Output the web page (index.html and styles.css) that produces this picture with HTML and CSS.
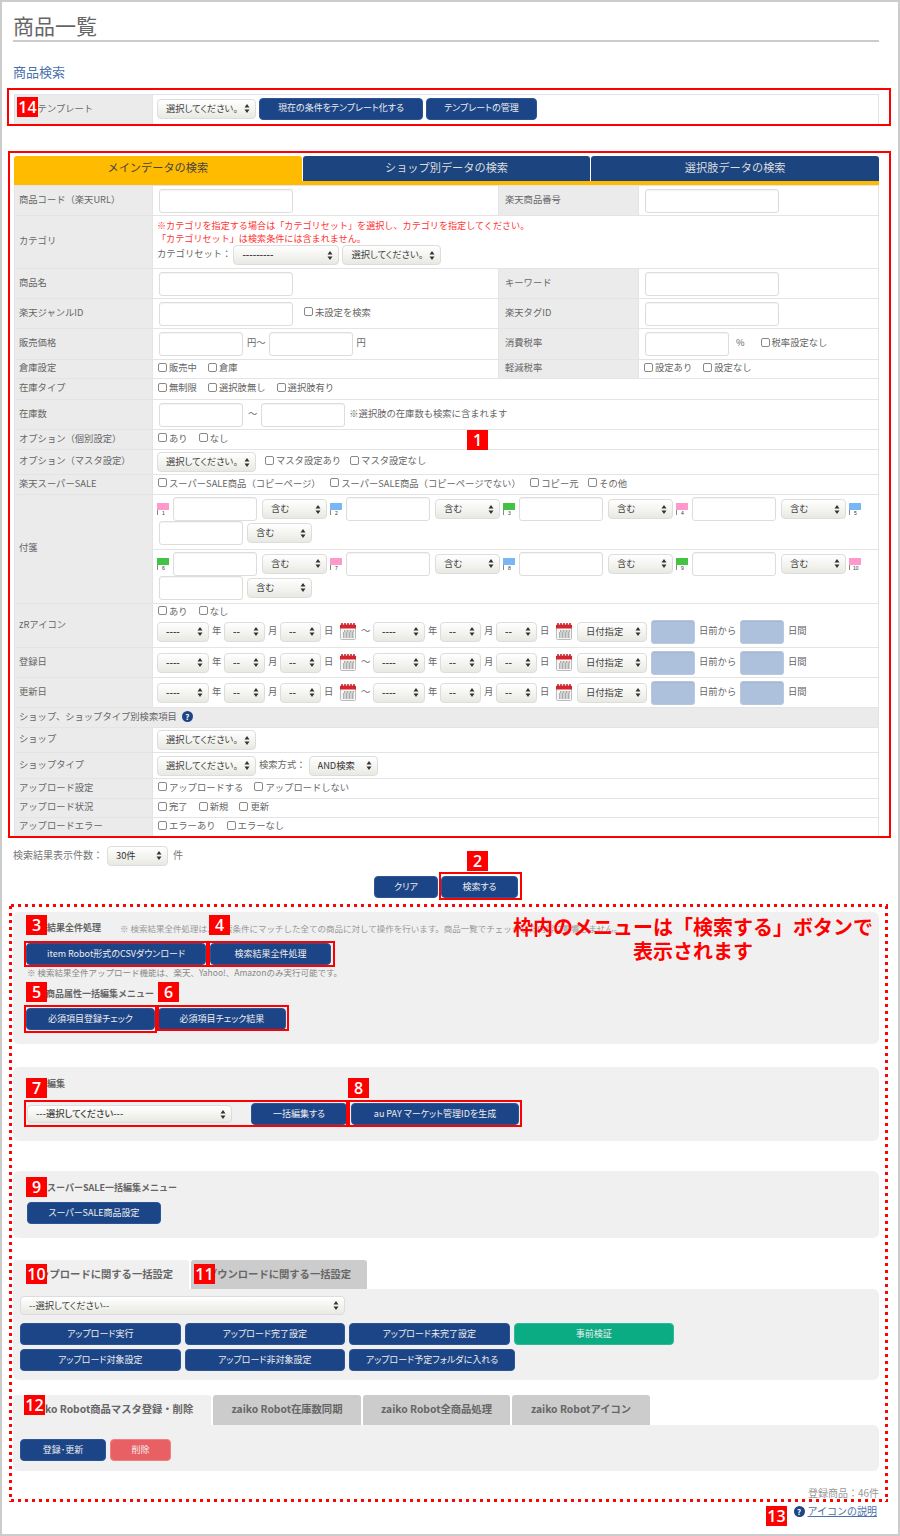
FILE: index.html
```html
<!DOCTYPE html>
<html lang="ja">
<head>
    <meta charset="UTF-8">
    <meta name="viewport" content="width=device-width, initial-scale=1.0">
    <title>商品一覧</title>
    <link rel="stylesheet" href="styles.css">
</head>
<body>
<svg class="defs" width="0" height="0">
    <symbol id="cal" viewBox="0 0 16 17">
        <rect x="0.5" y="1.5" width="15" height="15" rx="1" fill="#f6f6f6" stroke="#bbb"/>
        <rect x="0" y="2" width="16" height="3.5" fill="#d8232a"/>
        <path d="M2 0v3M5 0v3M8 0v3M11 0v3M14 0v3" stroke="#d8232a" stroke-width="1.6"/>
        <path d="M4 8h10M3 10h11M3 12h11M3 14h11" stroke="#666" stroke-width="1.2" stroke-dasharray="1 .5"/>
    </symbol>
    <symbol id="flag" viewBox="0 0 12 12">
        <rect width="12" height="7" fill="currentColor"/>
        <rect y="7" width="1" height="5" fill="#888"/>
    </symbol>
</svg>

<div class="page">
    <h1>商品一覧</h1>
    <h2>商品検索</h2>

    <table class="form form-tpl">
        <colgroup><col class="col-th"><col></colgroup>
        <tr class="h30">
            <th>検索テンプレート</th>
            <td>
                <div class="ctl">
                    <select class="sel sel-99"><option>選択してください。</option></select>
                    <a class="btn btn-tpl1">現在の条件をテンプレート化する</a>
                    <a class="btn btn-tpl2">テンプレートの管理</a>
                </div>
            </td>
        </tr>
    </table>

    <div class="tabs">
        <div class="tab on">メインデータの検索</div>
        <div class="tab">ショップ別データの検索</div>
        <div class="tab">選択肢データの検索</div>
    </div>

    <table class="form">
        <colgroup><col class="col-th"><col class="col-td"><col class="col-th2"><col></colgroup>
        <tr class="h30">
            <th>商品コード（楽天URL）</th>
            <td><input class="inp inp-l"></td>
            <th class="th2">楽天商品番号</th>
            <td><input class="inp inp-l"></td>
        </tr>
        <tr class="h53">
            <th>カテゴリ</th>
            <td colspan="3">
                <div class="red">※カテゴリを指定する場合は「カテゴリセット」を選択し、カテゴリを指定してください。</div>
                <div class="red">「カテゴリセット」は検索条件には含まれません。</div>
                <div class="ctl">
                    <span class="tx">カテゴリセット：</span>
                    <select class="sel sel-cat"><option>---------</option></select>
                    <select class="sel sel-99"><option>選択してください。</option></select>
                </div>
            </td>
        </tr>
        <tr class="h30">
            <th>商品名</th>
            <td><input class="inp inp-l"></td>
            <th class="th2">キーワード</th>
            <td><input class="inp inp-l"></td>
        </tr>
        <tr class="h30">
            <th>楽天ジャンルID</th>
            <td>
                <div class="ctl">
                    <input class="inp inp-l">
                    <label class="ck ck-after"><input type="checkbox">未設定を検索</label>
                </div>
            </td>
            <th class="th2">楽天タグID</th>
            <td><input class="inp inp-l"></td>
        </tr>
        <tr class="h31">
            <th>販売価格</th>
            <td>
                <div class="ctl">
                    <input class="inp inp-s"><span class="unit">円～</span><input class="inp inp-s"><span class="unit">円</span>
                </div>
            </td>
            <th class="th2">消費税率</th>
            <td>
                <div class="ctl">
                    <input class="inp inp-s"><span class="unit unit-pct">%</span>
                    <label class="ck"><input type="checkbox">税率設定なし</label>
                </div>
            </td>
        </tr>
        <tr class="h19">
            <th>倉庫設定</th>
            <td>
                <label class="ck"><input type="checkbox">販売中</label>
                <label class="ck"><input type="checkbox">倉庫</label>
            </td>
            <th class="th2">軽減税率</th>
            <td>
                <label class="ck"><input type="checkbox">設定あり</label>
                <label class="ck"><input type="checkbox">設定なし</label>
            </td>
        </tr>
        <tr class="h21">
            <th>在庫タイプ</th>
            <td colspan="3">
                <label class="ck"><input type="checkbox">無制限</label>
                <label class="ck"><input type="checkbox">選択肢無し</label>
                <label class="ck"><input type="checkbox">選択肢有り</label>
            </td>
        </tr>
        <tr class="h30">
            <th>在庫数</th>
            <td colspan="3">
                <div class="ctl">
                    <input class="inp inp-s"><span class="unit unit-tilde">～</span><input class="inp inp-s"><span class="unit">※選択肢の在庫数も検索に含まれます</span>
                </div>
            </td>
        </tr>
        <tr class="h20">
            <th>オプション（個別設定）</th>
            <td colspan="3">
                <label class="ck"><input type="checkbox">あり</label>
                <label class="ck"><input type="checkbox">なし</label>
            </td>
        </tr>
        <tr class="h25">
            <th>オプション（マスタ設定）</th>
            <td colspan="3">
                <div class="ctl">
                    <select class="sel sel-99"><option>選択してください。</option></select>
                    <label class="ck ck-after"><input type="checkbox">マスタ設定あり</label>
                    <label class="ck"><input type="checkbox">マスタ設定なし</label>
                </div>
            </td>
        </tr>
        <tr class="h20">
            <th>楽天スーパーSALE</th>
            <td colspan="3">
                <label class="ck ck-wide"><input type="checkbox">スーパーSALE商品（コピーページ）</label>
                <label class="ck ck-wide"><input type="checkbox">スーパーSALE商品（コピーページでない）</label>
                <label class="ck ck-wide"><input type="checkbox">コピー元</label>
                <label class="ck"><input type="checkbox">その他</label>
            </td>
        </tr>
        <tr class="h55">
            <th rowspan="2">付箋</th>
            <td colspan="3">
                <div class="sticky">
                    <svg class="flag pink"><use href="#flag"/><text x="5" y="12">1</text></svg><input class="inp inp-s"><select class="sel sel-inc"><option>含む</option></select>
                    <svg class="flag blue"><use href="#flag"/><text x="5" y="12">2</text></svg><input class="inp inp-s"><select class="sel sel-inc"><option>含む</option></select>
                    <svg class="flag green"><use href="#flag"/><text x="5" y="12">3</text></svg><input class="inp inp-s"><select class="sel sel-inc"><option>含む</option></select>
                    <svg class="flag pink"><use href="#flag"/><text x="5" y="12">4</text></svg><input class="inp inp-s"><select class="sel sel-inc"><option>含む</option></select>
                    <svg class="flag blue"><use href="#flag"/><text x="5" y="12">5</text></svg><input class="inp inp-s inp-lead"><select class="sel sel-inc sel-lead"><option>含む</option></select>
                </div>
            </td>
        </tr>
        <tr class="h54">
            <td colspan="3">
                <div class="sticky">
                    <svg class="flag green"><use href="#flag"/><text x="5" y="12">6</text></svg><input class="inp inp-s"><select class="sel sel-inc"><option>含む</option></select>
                    <svg class="flag pink"><use href="#flag"/><text x="5" y="12">7</text></svg><input class="inp inp-s"><select class="sel sel-inc"><option>含む</option></select>
                    <svg class="flag blue"><use href="#flag"/><text x="5" y="12">8</text></svg><input class="inp inp-s"><select class="sel sel-inc"><option>含む</option></select>
                    <svg class="flag green"><use href="#flag"/><text x="5" y="12">9</text></svg><input class="inp inp-s"><select class="sel sel-inc"><option>含む</option></select>
                    <svg class="flag pink"><use href="#flag"/><text x="4" y="12">10</text></svg><input class="inp inp-s inp-lead"><select class="sel sel-inc sel-lead"><option>含む</option></select>
                </div>
            </td>
        </tr>
        <tr class="h44">
            <th>zRアイコン</th>
            <td colspan="3">
                <div class="zr-checks">
                    <label class="ck"><input type="checkbox">あり</label>
                    <label class="ck"><input type="checkbox">なし</label>
                </div>
                <div class="ctl dates">
                    <select class="sel sel-y"><option>----</option></select><span>年</span>
                    <select class="sel sel-m"><option>--</option></select><span>月</span>
                    <select class="sel sel-m"><option>--</option></select><span>日</span>
                    <svg class="cal"><use href="#cal"/></svg><span class="tilde">～</span>
                    <select class="sel sel-y"><option>----</option></select><span>年</span>
                    <select class="sel sel-m"><option>--</option></select><span>月</span>
                    <select class="sel sel-m"><option>--</option></select><span>日</span>
                    <svg class="cal"><use href="#cal"/></svg>
                    <select class="sel sel-date"><option>日付指定</option></select>
                    <input class="inp inp-day"><span class="day-lb">日前から</span>
                    <input class="inp inp-day"><span class="day-lb">日間</span>
                </div>
            </td>
        </tr>
        <tr class="h30">
            <th>登録日</th>
            <td colspan="3">
                <div class="ctl dates">
                    <select class="sel sel-y"><option>----</option></select><span>年</span>
                    <select class="sel sel-m"><option>--</option></select><span>月</span>
                    <select class="sel sel-m"><option>--</option></select><span>日</span>
                    <svg class="cal"><use href="#cal"/></svg><span class="tilde">～</span>
                    <select class="sel sel-y"><option>----</option></select><span>年</span>
                    <select class="sel sel-m"><option>--</option></select><span>月</span>
                    <select class="sel sel-m"><option>--</option></select><span>日</span>
                    <svg class="cal"><use href="#cal"/></svg>
                    <select class="sel sel-date"><option>日付指定</option></select>
                    <input class="inp inp-day"><span class="day-lb">日前から</span>
                    <input class="inp inp-day"><span class="day-lb">日間</span>
                </div>
            </td>
        </tr>
        <tr class="h30">
            <th>更新日</th>
            <td colspan="3">
                <div class="ctl dates">
                    <select class="sel sel-y"><option>----</option></select><span>年</span>
                    <select class="sel sel-m"><option>--</option></select><span>月</span>
                    <select class="sel sel-m"><option>--</option></select><span>日</span>
                    <svg class="cal"><use href="#cal"/></svg><span class="tilde">～</span>
                    <select class="sel sel-y"><option>----</option></select><span>年</span>
                    <select class="sel sel-m"><option>--</option></select><span>月</span>
                    <select class="sel sel-m"><option>--</option></select><span>日</span>
                    <svg class="cal"><use href="#cal"/></svg>
                    <select class="sel sel-date"><option>日付指定</option></select>
                    <input class="inp inp-day"><span class="day-lb">日前から</span>
                    <input class="inp inp-day"><span class="day-lb">日間</span>
                </div>
            </td>
        </tr>
        <tr class="h20">
            <th colspan="4">ショップ、ショップタイプ別検索項目 <span class="help">?</span></th>
        </tr>
        <tr class="h25">
            <th>ショップ</th>
            <td colspan="3"><select class="sel sel-99"><option>選択してください。</option></select></td>
        </tr>
        <tr class="h26">
            <th>ショップタイプ</th>
            <td colspan="3">
                <div class="ctl">
                    <select class="sel sel-99"><option>選択してください。</option></select>
                    <span class="method">検索方式：</span>
                    <select class="sel sel-and"><option>AND検索</option></select>
                </div>
            </td>
        </tr>
        <tr class="h20">
            <th>アップロード設定</th>
            <td colspan="3">
                <label class="ck"><input type="checkbox">アップロードする</label>
                <label class="ck"><input type="checkbox">アップロードしない</label>
            </td>
        </tr>
        <tr class="h19">
            <th>アップロード状況</th>
            <td colspan="3">
                <label class="ck"><input type="checkbox">完了</label>
                <label class="ck"><input type="checkbox">新規</label>
                <label class="ck"><input type="checkbox">更新</label>
            </td>
        </tr>
        <tr class="h19">
            <th>アップロードエラー</th>
            <td colspan="3">
                <label class="ck"><input type="checkbox">エラーあり</label>
                <label class="ck"><input type="checkbox">エラーなし</label>
            </td>
        </tr>
    </table>

    <div class="count ctl">
        <span class="tx">検索結果表示件数：</span>
        <select class="sel sel-num"><option>30件</option></select>
        <span class="tx">件</span>
    </div>

    <div class="search-btns">
        <a class="btn btn-clear">クリア</a>
        <a class="btn btn-search">検索する</a>
    </div>

    <div class="panel panel-all">
        <div class="head-line">
            <span class="panel-title">検索結果全件処理</span>
            <span class="note-top">※ 検索結果全件処理は、検索条件にマッチした全ての商品に対して操作を行います。商品一覧でチェックした内容に影響しません。</span>
        </div>
        <div class="btn-row">
            <a class="btn btn-csv">item Robot形式のCSVダウンロード</a>
            <a class="btn btn-allproc">検索結果全件処理</a>
        </div>
        <p class="note-sub">※ 検索結果全件アップロード機能は、楽天、Yahoo!、Amazonのみ実行可能です。</p>
        <div class="panel-title title-attr">楽天商品属性一括編集メニュー</div>
        <div class="btn-row">
            <a class="btn btn-req1">必須項目登録チェック</a>
            <a class="btn btn-req2">必須項目チェック結果</a>
        </div>
    </div>

    <div class="panel panel-edit">
        <div class="panel-title title-edit">一括編集</div>
        <div class="ctl edit-row">
            <select class="sel sel-edit"><option>---選択してください---</option></select>
            <a class="btn btn-edit">一括編集する</a>
            <a class="btn btn-au">au PAY マーケット管理IDを生成</a>
        </div>
    </div>

    <div class="panel panel-sale">
        <div class="panel-title title-sale">楽天スーパーSALE一括編集メニュー</div>
        <a class="btn btn-sale">スーパーSALE商品設定</a>
    </div>

    <div class="subtabs subtabs-up">
        <div class="subtab on tab-up">アップロードに関する一括設定</div>
        <div class="subtab tab-up">ダウンロードに関する一括設定</div>
    </div>
    <div class="panel panel-up">
        <select class="sel sel-up"><option>--選択してください--</option></select>
        <div class="btn-grid">
            <a class="btn btn-up">アップロード実行</a>
            <a class="btn btn-up">アップロード完了設定</a>
            <a class="btn btn-up">アップロード未完了設定</a>
            <a class="btn btn-up btn-green">事前検証</a>
        </div>
        <div class="btn-grid">
            <a class="btn btn-up">アップロード対象設定</a>
            <a class="btn btn-up">アップロード非対象設定</a>
            <a class="btn btn-up btn-folder">アップロード予定フォルダに入れる</a>
        </div>
    </div>

    <div class="subtabs subtabs-zaiko">
        <div class="subtab on tab-z1">zaiko Robot商品マスタ登録・削除</div>
        <div class="subtab tab-z2">zaiko Robot在庫数同期</div>
        <div class="subtab tab-z3">zaiko Robot全商品処理</div>
        <div class="subtab tab-z4">zaiko Robotアイコン</div>
    </div>
    <div class="panel panel-zaiko">
        <a class="btn btn-reg">登録･更新</a>
        <a class="btn btn-del">削除</a>
    </div>

    <div class="total">登録商品：46件</div>
    <div class="icon-link"><span class="help">?</span><a href="#">アイコンの説明</a></div>

    <!-- 注釈 -->
    <div class="frame f-tpl"></div>
    <div class="frame f-main"></div>
    <div class="frame f-search"></div>
    <div class="frame f-3"></div>
    <div class="frame f-4"></div>
    <div class="frame f-5"></div>
    <div class="frame f-6"></div>
    <div class="frame f-7"></div>
    <div class="frame f-8"></div>
    <div class="dotted"></div>
    <div class="caption">枠内のメニューは「検索する」ボタンで<br>表示されます</div>
    <span class="badge b14">14</span>
    <span class="badge b1">1</span>
    <span class="badge b2">2</span>
    <span class="badge b3">3</span>
    <span class="badge b4">4</span>
    <span class="badge b5">5</span>
    <span class="badge b6">6</span>
    <span class="badge b7">7</span>
    <span class="badge b8">8</span>
    <span class="badge b9">9</span>
    <span class="badge b10">10</span>
    <span class="badge b11">11</span>
    <span class="badge b12">12</span>
    <span class="badge b13">13</span>
</div>
</body>
</html>
```

FILE: styles.css
```css
* {
    box-sizing: border-box;
}

body {
    margin: 0;
    font-family: "Noto Sans CJK JP", "Noto Sans", sans-serif;
    font-size: 9.3px;
    color: #666;
}

.defs {
    position: absolute;
}

.page {
    position: relative;
    width: 900px;
    height: 1536px;
    overflow: hidden;
    padding: 14px 21px 0 13px;
    background: #fff;
    box-shadow: inset 0 0 0 2px #ccc;
}

h1 {
    margin: 0;
    height: 28px;
    border-bottom: 2px solid #ccc;
    font-size: 21px;
    font-weight: 400;
    line-height: 22px;
    color: #666;
}

h2 {
    margin: 23px 0 15px;
    font-size: 13px;
    font-weight: 400;
    line-height: 14px;
    color: #4a72ad;
}

/* フォーム */
.form {
    width: 865px;
    margin-left: 1px;
    border-collapse: collapse;
    table-layout: fixed;
}

.form th,
.form td {
    border: 1px solid #e4e4e4;
    padding: 0 4px;
    font-weight: 400;
    line-height: 13px;
    text-align: left;
    vertical-align: middle;
}

.form th {
    padding-bottom: 3px;
    background: #ebebeb;
}

.form .th2 {
    padding-left: 6px;
}

.form-tpl td {
    padding-bottom: 2px;
}

.col-th { width: 138px; }
.col-td { width: 346px; }
.col-th2 { width: 140px; }

.h19 { height: 19px; }
.h20 { height: 20px; }
.h21 { height: 21px; }
.h25 { height: 25px; }
.h26 { height: 26px; }
.h30 { height: 30px; }
.h31 { height: 31px; }
.h44 { height: 44px; }
.h53 { height: 53px; }
.h54 { height: 54px; }
.h55 { height: 55px; }

.ctl {
    display: flex;
    align-items: center;
}

.tx,
.unit,
.method,
.dates span {
    padding-bottom: 3px;
    white-space: nowrap;
}

.red {
    color: #f33;
    font-size: 9.1px;
    line-height: 13px;
}

.inp {
    display: block;
    margin: 0 2px;
    height: 24px;
    border: 1px solid #ddd;
    border-radius: 3px;
    background: #fff;
    box-shadow: inset 0 1px 1px rgba(0, 0, 0, .05);
    outline: none;
}

.inp-l { width: 134px; }
.inp-s { width: 84px; }

.inp-day {
    width: 44px;
    margin: 0;
    border-color: #b8c8de;
    background: #adc1dc;
}

.unit {
    margin: 0 1px 0 2px;
}

.unit-tilde {
    margin: 0 2px 0 3px;
}

.unit-pct {
    margin: 0 15px 0 5px;
}

.sel {
    display: block;
    flex: none;
    height: 20px;
    border: 1px solid #ddd;
    border-radius: 4px;
    padding: 0 0 2px 8px;
    appearance: none;
    background: url("data:image/svg+xml,%3Csvg xmlns='http://www.w3.org/2000/svg' width='6' height='9'%3E%3Cpath d='M3 0l2.5 3.5h-5zM3 9l2.5-3.5h-5z' fill='%23333'/%3E%3C/svg%3E") no-repeat right 5px center,
        linear-gradient(#fff, #e9e9e3);
    font-family: inherit;
    font-size: 9.3px;
    font-feature-settings: "palt";
    color: #444;
}

.sel-99 { width: 99px; }
.sel-cat { width: 106px; margin: 0 3px 0 2px; font-weight: 700; }
.sel-inc { width: 65px; margin-left: 5px; }
.sel-y { width: 52px; font-weight: 700; }
.sel-m { width: 41px; font-weight: 700; }
.sel-date { width: 70px; margin-right: 4px; }
.sel-and { width: 69px; color: #333; }
.sel-num { width: 61px; margin: 0 5px 0 4px; color: #333; }

.ck {
    display: inline-flex;
    align-items: center;
    margin: 0 8px 0 1px;
    padding-bottom: 3px;
    white-space: nowrap;
}

.ck input {
    width: 9px;
    height: 9px;
    margin: -1px 2px 0 0;
    border: 1px solid #888;
    border-radius: 2px;
    appearance: none;
    background: #fff;
}

.ck-after {
    margin-left: 9px;
}

.ck-wide {
    margin-right: 6.5px;
}

.method {
    margin: 0 3px;
}

.zr-checks {
    height: 14px;
    margin-bottom: 1px;
}

.zr-checks + .dates {
    margin-bottom: 3px;
}

/* 付箋 */
.sticky {
    display: flex;
    flex-wrap: wrap;
    align-items: center;
    margin: 0 0 2px;
}

.sticky .inp {
    margin: 0 0 0 4px;
}

.sticky .inp-lead {
    margin-left: 2px;
}

.sticky .sel-lead {
    margin-left: 4px;
}

.flag {
    width: 12px;
    height: 12px;
    margin-left: 3px;
}

.sticky .flag:first-child {
    margin-left: 0;
}

.flag text {
    font-family: "Liberation Sans", sans-serif;
    font-size: 5px;
    fill: #333;
}

.pink { color: #ff99cc; }
.blue { color: #78b6f6; }
.green { color: #43c243; }

/* 日付 */
.dates span {
    flex: none;
    width: 9px;
    margin: 0 3px;
}

.dates .day-lb {
    width: 36px;
    margin: 0 5px 0 4px;
}

.cal {
    flex: none;
    width: 16px;
    height: 17px;
    margin: 0 5px 0 4px;
}

.dates .tilde {
    margin: 0 3px 0 0;
}

.help {
    display: inline-block;
    width: 11px;
    height: 11px;
    margin-left: 3px;
    border-radius: 50%;
    background: #1c4587;
    color: #fff;
    font-size: 8px;
    font-weight: 700;
    line-height: 11px;
    text-align: center;
}

/* タブ */
.tabs {
    display: flex;
    gap: 1px;
    width: 865px;
    height: 29px;
    margin: 31px 0 0 1px;
    border-bottom: 4px solid #ffbb00;
}

.tab {
    flex: 1;
    height: 25px;
    border-radius: 3px 3px 0 0;
    background: #1c4580;
    color: #ddd;
    font-size: 11.2px;
    line-height: 22px;
    text-align: center;
}

.tab.on {
    height: 29px;
    background: #ffbb00;
    color: #444;
}

/* ボタン */
.btn {
    display: flex;
    align-items: center;
    justify-content: center;
    flex: none;
    height: 22px;
    border: 1px solid #2d5596;
    border-radius: 4px;
    padding-bottom: 2px;
    background: #1c4587;
    color: #eee;
    font-size: 9px;
    font-weight: 400;
    font-feature-settings: "palt";
    white-space: nowrap;
}

.btn-tpl1 { width: 164px; margin: 0 3px; }
.btn-tpl2 { width: 111px; }
.btn-clear { width: 64px; }
.btn-search { width: 77px; }
.btn-csv { width: 180px; margin-right: 4px; }
.btn-allproc { width: 121px; }
.btn-req1 { width: 129px; margin-right: 3px; }
.btn-req2 { width: 128px; }
.btn-edit { width: 96px; margin: 0 4px 0 19px; }
.btn-au { width: 168px; }
.btn-sale { width: 134px; }
.btn-up { width: 160.5px; }
.btn-folder { width: 166px; }
.btn-green { background: #0bab83; border-color: #2dbb97; }
.btn-reg { width: 86px; }
.btn-del { width: 61px; margin-left: 4px; background: #e96064; border-color: #ee8084; }

.count {
    height: 19px;
    margin-top: 9px;
    font-size: 10px;
    color: #777;
}

.search-btns {
    display: flex;
    justify-content: center;
    gap: 3px;
    width: 866px;
    margin-top: 11px;
}

/* パネル */
.panel {
    width: 866px;
    border-radius: 6px;
    background: #f0f0f0;
}

.panel-title {
    font-size: 9px;
    font-weight: 700;
    line-height: 14px;
    color: #666;
}

.panel-all {
    height: 132px;
    margin-top: 14px;
    padding: 9px 0 0 13px;
}

.head-line {
    display: flex;
    height: 14px;
    padding-left: 3px;
}

.note-top {
    margin-left: 19px;
    font-size: 8.5px;
    line-height: 14px;
    color: #999;
    white-space: nowrap;
}

.btn-row {
    display: flex;
    margin-top: 8px;
}

.note-sub {
    margin: 0 0 0 1px;
    font-size: 8.5px;
    line-height: 14px;
    color: #888;
}

.title-attr {
    margin: 8px 0 -1px 2px;
}

.panel-edit {
    height: 74px;
    margin-top: 23px;
    padding: 10px 0 0 14px;
}

.title-edit {
    margin-left: 2px;
}

.edit-row {
    margin-top: 12px;
}

.sel-edit {
    width: 205px;
    height: 18px;
    font-weight: 500;
}

.panel-sale {
    height: 67px;
    margin-top: 30px;
    padding: 10px 0 0 14px;
}

.title-sale {
    padding-left: 2px;
}

.panel-sale .btn {
    margin-top: 7px;
}

.subtabs {
    display: flex;
    gap: 2px;
}

.subtabs-up {
    margin-top: 22px;
}

.subtabs-zaiko {
    margin-top: 15px;
}

.subtab {
    border-radius: 3px 3px 0 0;
    background: #ccc;
    font-weight: 700;
    color: #666;
    white-space: nowrap;
    text-align: center;
}

.subtab.on {
    background: #f0f0f0;
}

.tab-up {
    width: 176px;
    height: 29px;
    font-size: 10.3px;
    line-height: 28px;
}

.tab-z1,
.tab-z2,
.tab-z3,
.tab-z4 {
    height: 30px;
    font-size: 10.3px;
    line-height: 28px;
}

.tab-z1 { width: 198px; background: #f0f0f0; }
.tab-z2 { width: 148px; }
.tab-z3 { width: 147px; }
.tab-z4 { width: 138px; }

.panel-up {
    height: 91px;
    padding: 7px 0 0 7px;
    border-radius: 0 6px 6px 6px;
}

.sel-up {
    width: 325px;
    height: 19px;
}

.btn-grid {
    display: flex;
    gap: 4px;
    margin-top: 8px;
}

.btn-grid + .btn-grid {
    margin-top: 4px;
}

.panel-zaiko {
    display: flex;
    height: 46px;
    padding: 14px 0 0 7px;
    border-radius: 0 6px 6px 6px;
}

.total {
    width: 866px;
    margin-top: 14px;
    font-size: 10px;
    line-height: 16px;
    color: #999;
    text-align: right;
}

.icon-link {
    display: flex;
    align-items: center;
    justify-content: flex-end;
    gap: 3px;
    width: 864px;
    margin-top: 2px;
    font-size: 10px;
    line-height: 16px;
}

.icon-link a {
    color: #4a72a8;
}

/* 注釈 */
.frame {
    position: absolute;
    border: 2px solid #f00;
}

.f-tpl { left: 7px; top: 88px; width: 884px; height: 38px; }
.f-main { left: 8px; top: 151px; width: 883px; height: 687px; }
.f-search { left: 439px; top: 872px; width: 83px; height: 28px; }
.f-3 { left: 24px; top: 941px; width: 184px; height: 26px; }
.f-4 { left: 208px; top: 941px; width: 127px; height: 26px; }
.f-5 { left: 24px; top: 1005px; width: 133px; height: 28px; }
.f-6 { left: 157px; top: 1005px; width: 132px; height: 26px; }
.f-7 { left: 24px; top: 1100px; width: 324px; height: 27px; }
.f-8 { left: 348px; top: 1100px; width: 174px; height: 27px; }

.dotted {
    position: absolute;
    left: 9px;
    top: 904px;
    width: 879px;
    height: 598px;
    background:
        radial-gradient(circle, #f00 1.4px, transparent 1.8px) left top / 7px 3px repeat-x,
        radial-gradient(circle, #f00 1.4px, transparent 1.8px) left bottom / 7px 3px repeat-x,
        radial-gradient(circle, #f00 1.4px, transparent 1.8px) left top / 3px 7px repeat-y,
        radial-gradient(circle, #f00 1.4px, transparent 1.8px) right top / 3px 7px repeat-y;
}

.caption {
    position: absolute;
    left: 513px;
    top: 915px;
    width: 360px;
    font-size: 20px;
    font-weight: 700;
    line-height: 24px;
    color: #f00;
    text-align: center;
    white-space: nowrap;
}

.badge {
    position: absolute;
    width: 21px;
    height: 20px;
    background: #f00;
    color: #fff;
    font-family: "Open Sans", sans-serif;
    font-size: 16px;
    font-weight: 600;
    line-height: 20px;
    text-align: center;
}

.b14 { left: 17px; top: 97px; }
.b1 { left: 467px; top: 430px; }
.b2 { left: 467px; top: 851px; }
.b3 { left: 26px; top: 915px; }
.b4 { left: 209px; top: 915px; }
.b5 { left: 26px; top: 982px; }
.b6 { left: 158px; top: 982px; }
.b7 { left: 26px; top: 1078px; }
.b8 { left: 348px; top: 1078px; }
.b9 { left: 26px; top: 1177px; }
.b10 { left: 26px; top: 1264px; }
.b11 { left: 194px; top: 1264px; }
.b12 { left: 24px; top: 1395px; }
.b13 { left: 766px; top: 1506px; }
```
